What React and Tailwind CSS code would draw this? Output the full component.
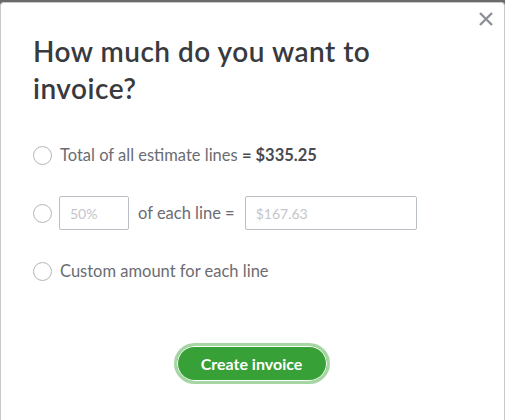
import { useState } from "react";

const Radio = ({ checked, onClick }) => (
  <button
    type="button"
    onClick={onClick}
    className="w-[19px] h-[19px] rounded-full border border-[#b5b6ba] bg-white flex items-center justify-center shrink-0"
  >
    {checked && <span className="w-[9px] h-[9px] rounded-full bg-[#2ca01c]" />}
  </button>
);

export default function App() {
  const [choice, setChoice] = useState(null);

  return (
    <div
      className="w-[505px] h-[420px] bg-[#6a6a6a] pt-[2px] overflow-hidden"
      style={{ fontFamily: "Lato, 'Open Sans', sans-serif" }}
    >
      <div className="relative h-[418px] bg-white border border-b-0 border-[#c9c9c9] rounded-t-[4px] px-[32px] pt-[30px]">
        {/* close */}
        <button type="button" className="absolute right-[10px] top-[8px] w-[16px] h-[16px]">
          <svg viewBox="0 0 16 16" className="w-[16px] h-[16px]">
            <path d="M2 2 L14 14 M14 2 L2 14" stroke="#8d9096" strokeWidth="2.4" />
          </svg>
        </button>

        <h1 className="text-[28px] leading-[37px] font-semibold text-[#393a3d] tracking-[0.5px]">
          How much do you want to
          <br />
          invoice?
        </h1>

        <div className="mt-[36px] flex flex-col text-[16.5px] text-[#6b6c72]">
          <div className="flex items-center gap-[8px] h-[24px]">
            <Radio checked={choice === 0} onClick={() => setChoice(0)} />
            <span>
              Total of all estimate lines <span className="font-bold text-[#4a4b50]">= $335.25</span>
            </span>
          </div>

          <div className="flex items-center mt-[29px]">
            <Radio checked={choice === 1} onClick={() => setChoice(1)} />
            <input
              placeholder="50%"
              className="ml-[7px] w-[70px] h-[34px] border border-[#babec5] rounded-[2px] px-[10px] text-[14px] placeholder-[#c4c6cb] outline-none"
            />
            <span className="ml-[9px]">of each line =</span>
            <input
              placeholder="$167.63"
              className="ml-[10px] w-[172px] h-[34px] border border-[#babec5] rounded-[2px] px-[10px] text-[14px] placeholder-[#c4c6cb] outline-none"
            />
          </div>

          <div className="flex items-center gap-[8px] h-[24px] mt-[29px]">
            <Radio checked={choice === 2} onClick={() => setChoice(2)} />
            <span>Custom amount for each line</span>
          </div>
        </div>

        <div className="flex justify-center mt-[60px] pr-[2px]">
          <button
            type="button"
            className="w-[156px] h-[41px] rounded-full bg-[#37a036] border-[3px] border-[#a6d6a3] text-white font-bold text-[16px] shadow-[inset_0_0_0_1px_#ffffff]"
          >
            Create invoice
          </button>
        </div>
      </div>
    </div>
  );
}
